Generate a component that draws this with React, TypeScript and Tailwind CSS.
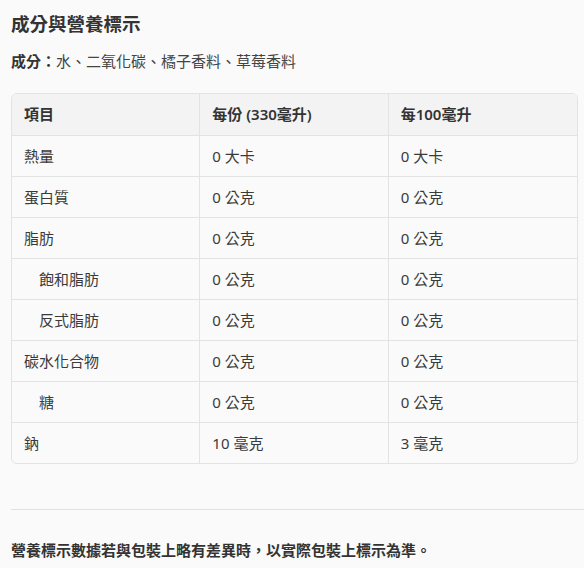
const rows: { name: string; indent?: boolean; serving: string; per100: string }[] = [
  { name: "熱量", serving: "0 大卡", per100: "0 大卡" },
  { name: "蛋白質", serving: "0 公克", per100: "0 公克" },
  { name: "脂肪", serving: "0 公克", per100: "0 公克" },
  { name: "飽和脂肪", indent: true, serving: "0 公克", per100: "0 公克" },
  { name: "反式脂肪", indent: true, serving: "0 公克", per100: "0 公克" },
  { name: "碳水化合物", serving: "0 公克", per100: "0 公克" },
  { name: "糖", indent: true, serving: "0 公克", per100: "0 公克" },
  { name: "鈉", serving: "10 毫克", per100: "3 毫克" },
];

export default function App() {
  return (
    <main className="min-h-[568px] bg-[#fafafa] pt-[12px] pl-[11px] text-[#333] font-['Noto_Sans','Noto_Sans_CJK_TC',sans-serif]">
      <div className="pr-[6px]">
        <h2 className="text-[18.5px] leading-[24px] font-bold text-[#333]">成分與營養標示</h2>
        <p className="mt-[13px] text-[15px] leading-[24px] text-[#444]">
          <span className="font-bold text-[#333]">成分：</span>水、二氧化碳、橘子香料、草莓香料
        </p>

        <div className="mt-[20px] overflow-hidden rounded-[6px] border border-[#e3e3e3] text-[15px]">
          <div className="grid h-[41px] grid-cols-3 items-center bg-[#f3f3f3] font-semibold">
            <div className="flex h-full items-center border-r border-[#e3e3e3] px-[12px]">項目</div>
            <div className="flex h-full items-center border-r border-[#e3e3e3] px-[12px]">每份 (330毫升)</div>
            <div className="flex h-full items-center px-[12px]">每100毫升</div>
          </div>
          {rows.map((row) => (
            <div key={row.name} className="grid h-[41px] grid-cols-3 border-t border-[#e3e3e3] text-[#3a3a3a]">
              <div className={`flex items-center border-r border-[#e3e3e3] ${row.indent ? "pl-[27px]" : "pl-[12px]"}`}>
                {row.name}
              </div>
              <div className="flex items-center border-r border-[#e3e3e3] px-[12px]">{row.serving}</div>
              <div className="flex items-center px-[12px]">{row.per100}</div>
            </div>
          ))}
        </div>
      </div>

      <hr className="mt-[45px] border-t border-[#e0e0e0]" />

      <p className="mt-[28px] text-[15px] leading-[24px] font-bold text-[#333]">
        營養標示數據若與包裝上略有差異時，以實際包裝上標示為準。
      </p>
    </main>
  );
}
